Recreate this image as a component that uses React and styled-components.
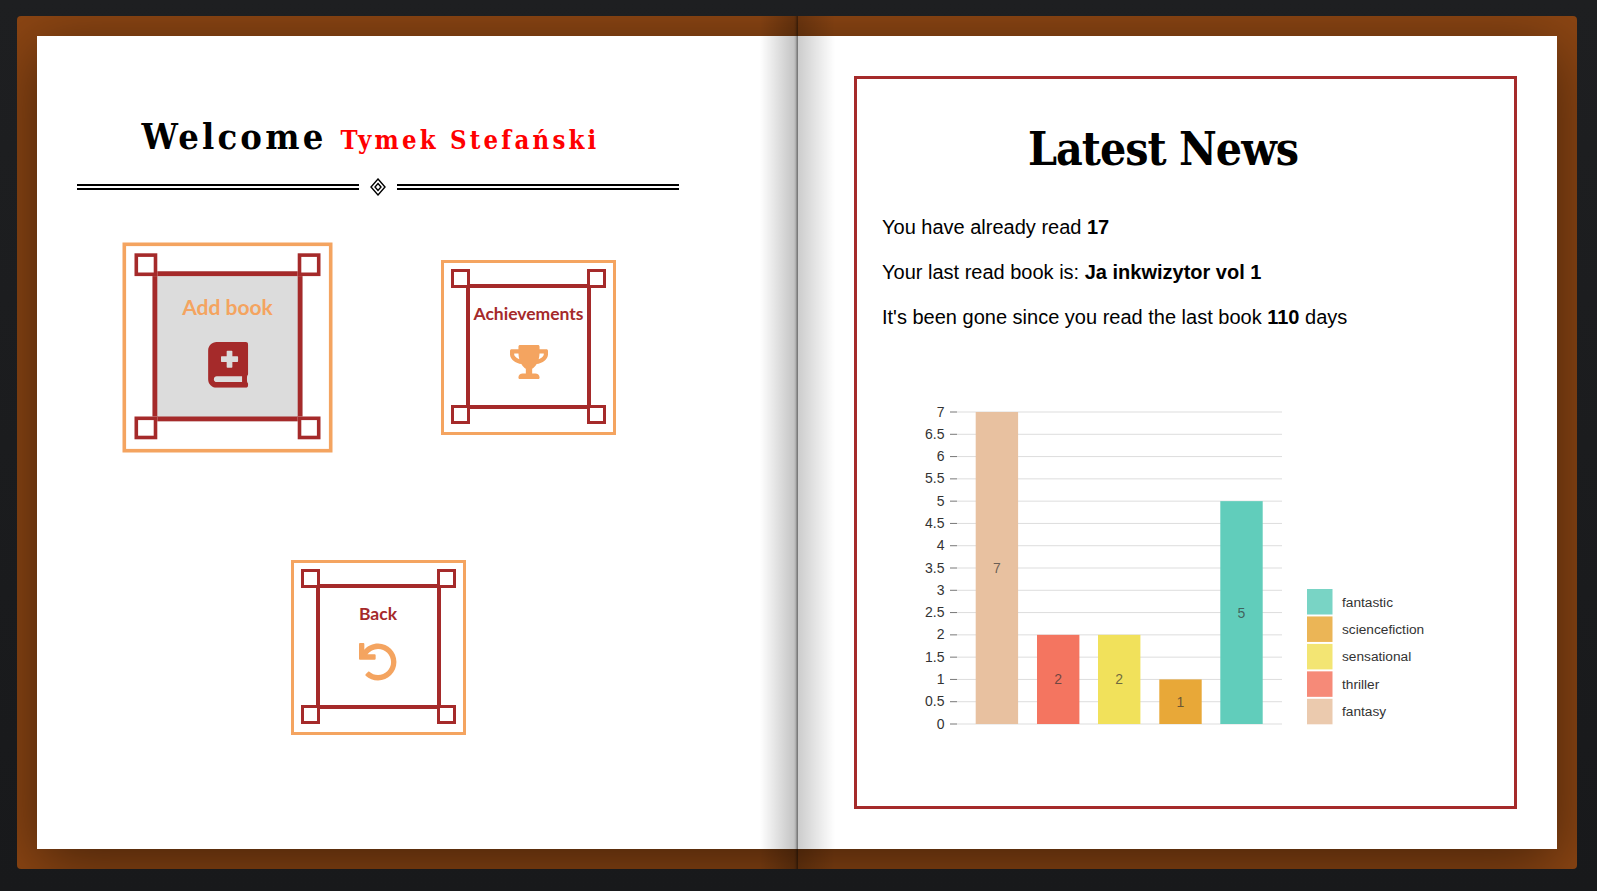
import styled, { createGlobalStyle } from 'styled-components'
import { FaBookMedical, FaTrophy, FaUndo } from 'react-icons/fa'

const GlobalStyle = createGlobalStyle`
  html, body {
    margin: 0;
    height: 100%;
    overflow: hidden;
  }
  body {
    background: linear-gradient(to bottom, #1e1f21, #18191b);
    font-family: 'Liberation Sans', Arial, sans-serif;
  }
`
const Book = styled.div`
  position: relative;
  box-sizing: border-box;
  width: 1560px;
  height: 853px;
  margin: 16px 0 0 17px;
  padding: 20px;
  overflow: hidden;
  border-radius: 4px;
  background: #8b4513;
`
const Pages = styled.div`
  display: flex;
  box-shadow: 0 14px 60px rgba(0, 0, 0, 0.5);
`
const Spine = styled.div`
  position: absolute;
  top: 0;
  bottom: 0;
  left: 743px;
  width: 75px;
  pointer-events: none;
  background: linear-gradient(
    to right,
    rgba(0, 0, 0, 0) 0,
    rgba(0, 0, 0, 0.23) 34px,
    rgba(0, 0, 0, 0.33) 36px,
    rgba(0, 0, 0, 0.52) 37px,
    rgba(0, 0, 0, 0.52) 38px,
    rgba(0, 0, 0, 0.2) 38px,
    rgba(0, 0, 0, 0) 75px
  );
`
const LeftPage = styled.section`
  box-sizing: border-box;
  width: 760px;
  height: 813px;
  padding: 0 118px 0 40px;
  background: #fff;
`
const RightPage = styled.section`
  box-sizing: border-box;
  width: 760px;
  height: 813px;
  padding: 40px 40px 40px 57px;
  background: #fff;
`
const Title = styled.h1`
  margin: 0;
  padding: 72px 15px 0 0;
  height: 56px;
  display: flex;
  justify-content: center;
  align-items: baseline;
  gap: 14px;
  font-family: 'DejaVu Serif Condensed', 'DejaVu Serif', serif;
  font-weight: 700;
  line-height: 56px;
  white-space: nowrap;
`
const Greeting = styled.span`
  font-size: 36px;
  letter-spacing: 3.2px;
  color: #000;
`
const UserName = styled.span`
  font-size: 25.5px;
  letter-spacing: 3.2px;
  color: #f00;
`
const Divider = styled.div`
  display: flex;
  align-items: center;
  justify-content: space-between;
  margin-top: 14px;
  height: 18px;
`
const DoubleLine = styled.div`
  width: 282px;
  height: 2px;
  border-top: 2px solid #000;
  border-bottom: 2px solid #000;
`
const CardRow = styled.div`
  display: flex;
  justify-content: ${(p) => p.$justify};
  margin-top: ${(p) => p.$top}px;
`
const Card = styled.a`
  position: relative;
  box-sizing: border-box;
  width: 175px;
  height: 175px;
  padding-bottom: 2px;
  display: flex;
  align-items: center;
  justify-content: center;
  border: 3px solid #f4a460;
  background: #fff;
  transform: ${(p) => (p.$active ? 'scale(1.2)' : 'none')};
`
const CardFace = styled.div`
  box-sizing: border-box;
  width: 125px;
  height: 125px;
  padding-top: 16px;
  display: flex;
  flex-direction: column;
  align-items: center;
  border: 4px solid #a52a2a;
  background: ${(p) => (p.$active ? '#dcdcdc' : '#fff')};
`
const CardLabel = styled.div`
  font-family: Lato, sans-serif;
  font-size: 17.5px;
  line-height: 20px;
  font-weight: 700;
  white-space: nowrap;
  color: ${(p) => (p.$active ? '#f4a460' : '#a52a2a')};
`
const CardIcon = styled.div`
  display: flex;
  margin-top: 19px;
  font-size: 38px;
  color: ${(p) => (p.$active ? '#a52a2a' : '#f4a460')};
`
const Corner = styled.span`
  position: absolute;
  box-sizing: border-box;
  width: 19px;
  height: 19px;
  border: 3.5px solid #a52a2a;
  background: #fff;
  ${(p) => (p.$bottom ? 'bottom: 8px;' : 'top: 6px;')}
  ${(p) => (p.$right ? 'right: 7px;' : 'left: 7px;')}
`
const NewsFrame = styled.div`
  box-sizing: border-box;
  height: 733px;
  padding: 40px 24px 0 25px;
  border: 3px solid #a52a2a;
`
const NewsTitle = styled.h2`
  margin: 0 0 37px;
  padding-right: 46px;
  font-family: 'DejaVu Serif Condensed', 'DejaVu Serif', serif;
  font-size: 46px;
  letter-spacing: -1px;
  line-height: 60px;
  font-weight: 700;
  text-align: center;
  color: #000;
`
const NewsLine = styled.p`
  margin: 0 0 22px;
  font-size: 20px;
  line-height: 23px;
  color: #000;
`
const ChartBox = styled.svg`
  display: block;
  margin: 70px 0 0 18px;
  font-family: 'Liberation Sans', Arial, sans-serif;
`

const bars = [
  { name: 'fantasy', value: 7, color: '#e8c1a0', left: 75.7 },
  { name: 'thriller', value: 2, color: '#f47560', left: 137 },
  { name: 'sensational', value: 2, color: '#f1e15b', left: 198 },
  { name: 'sciencefiction', value: 1, color: '#e8a838', left: 259.3 },
  { name: 'fantastic', value: 5, color: '#61cdbb', left: 320.3 },
]
const ticks = Array.from({ length: 15 }, (_, i) => i / 2)
const baseY = 325
const unit = 44.57

function BarChart() {
  return (
    <ChartBox width="560" height="345" viewBox="0 0 560 345">
      {ticks.map((t) => {
        const y = baseY - t * unit
        return (
          <g key={t}>
            <line x1="57" x2="382" y1={y} y2={y} stroke="#dddddd" />
            <line x1="50" x2="57" y1={y} y2={y} stroke="#777777" />
            <text x="44.5" y={y + 4.5} textAnchor="end" fontSize="14" fill="#333333">
              {t}
            </text>
          </g>
        )
      })}
      {bars.map((b) => {
        const h = b.value * unit
        return (
          <g key={b.name}>
            <rect x={b.left} y={baseY - h} width="42.4" height={h} fill={b.color} />
            <text
              x={b.left + 21.2}
              y={baseY - h / 2 + 5}
              textAnchor="middle"
              fontSize="14"
              fill="#333333"
              fillOpacity="0.7"
            >
              {b.value}
            </text>
          </g>
        )
      })}
      {[...bars].reverse().map((b, i) => (
        <g key={b.name}>
          <rect x="407" y={190 + i * 27.45} width="25.5" height="25.5" fill={b.color} fillOpacity="0.85" />
          <text x="442" y={207.5 + i * 27.45} fontSize="13.7" fill="#333333">
            {b.name}
          </text>
        </g>
      ))}
    </ChartBox>
  )
}

function Diamond() {
  return (
    <svg width="18" height="18" viewBox="0 0 18 18">
      <polygon points="9,1 16,9 9,17 2,9" fill="none" stroke="#000" strokeWidth="1.4" />
      <polygon points="9,5.5 12,9 9,12.5 6,9" fill="none" stroke="#000" strokeWidth="1.4" />
    </svg>
  )
}

function MenuCard({ label, icon, active }) {
  return (
    <Card $active={active}>
      <CardFace $active={active}>
        <CardLabel $active={active}>{label}</CardLabel>
        <CardIcon $active={active}>{icon}</CardIcon>
      </CardFace>
      <Corner />
      <Corner $right />
      <Corner $bottom />
      <Corner $bottom $right />
    </Card>
  )
}

export default function App() {
  return (
    <>
      <GlobalStyle />
      <Book>
        <Pages>
          <LeftPage>
            <Title>
              <Greeting>Welcome</Greeting>
              <UserName>Tymek Stefański</UserName>
            </Title>
            <Divider>
              <DoubleLine />
              <Diamond />
              <DoubleLine />
            </Divider>
            <CardRow $justify="space-around" $top={64}>
              <MenuCard label="Add book" icon={<FaBookMedical />} active />
              <MenuCard label="Achievements" icon={<FaTrophy />} />
            </CardRow>
            <CardRow $justify="center" $top={125}>
              <MenuCard label="Back" icon={<FaUndo />} />
            </CardRow>
          </LeftPage>
          <RightPage>
            <NewsFrame>
              <NewsTitle>Latest News</NewsTitle>
              <NewsLine>
                You have already read <b>17</b>
              </NewsLine>
              <NewsLine>
                Your last read book is: <b>Ja inkwizytor vol 1</b>
              </NewsLine>
              <NewsLine>
                It's been gone since you read the last book <b>110</b> days
              </NewsLine>
              <BarChart />
            </NewsFrame>
          </RightPage>
        </Pages>
        <Spine />
      </Book>
    </>
  )
}
